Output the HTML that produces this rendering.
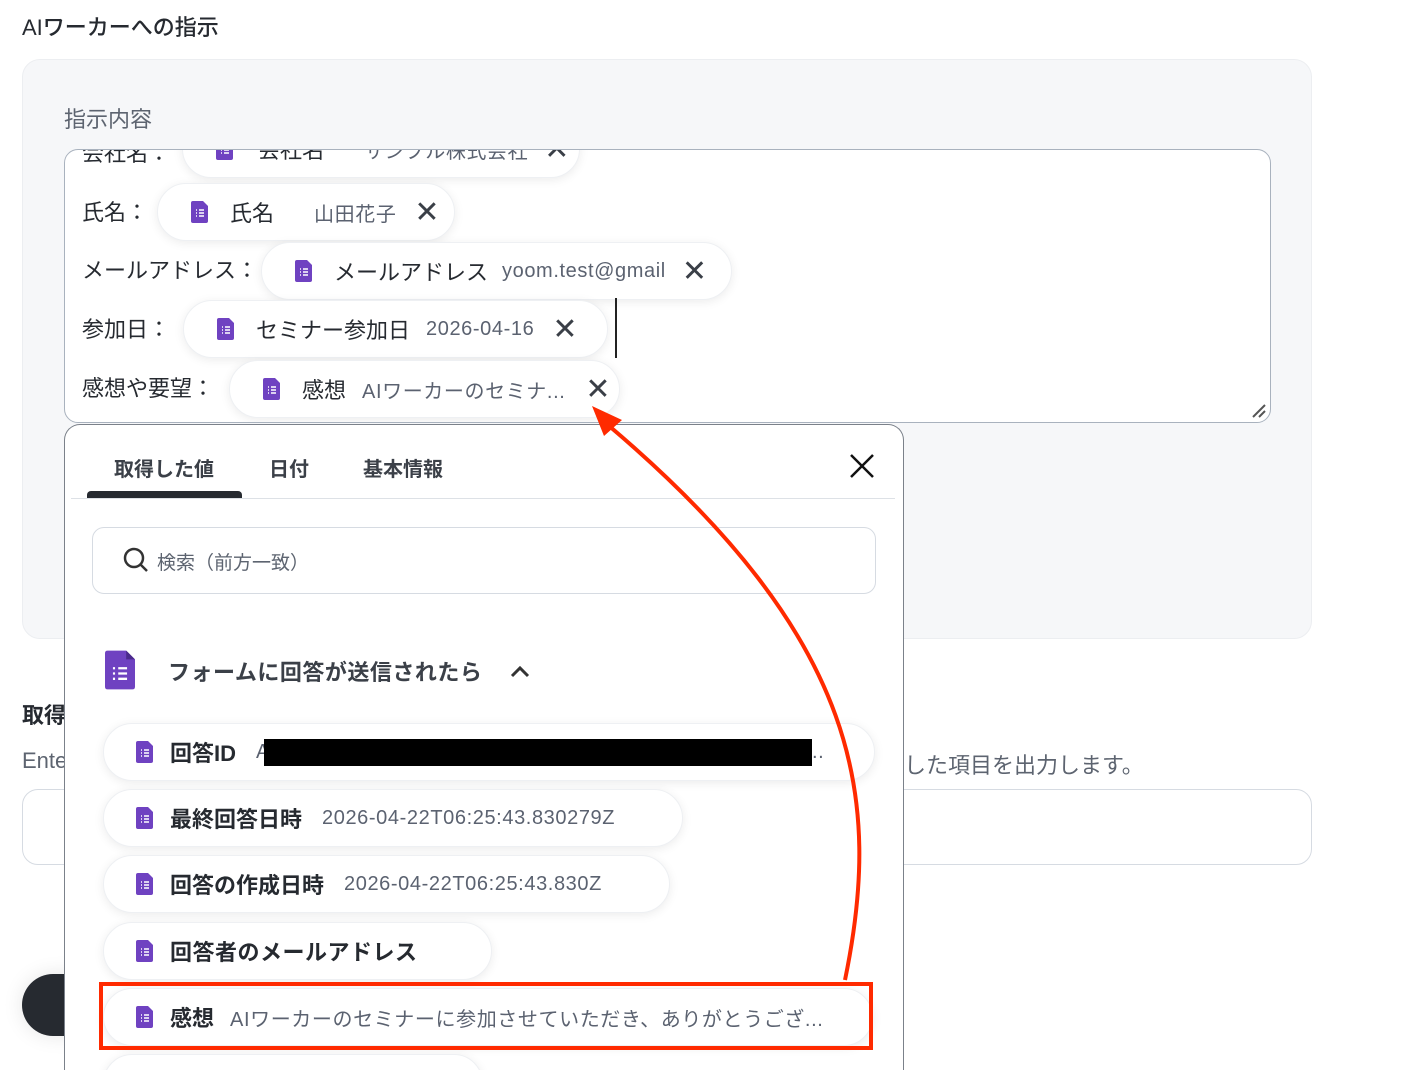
<!DOCTYPE html>
<html style="width:1406px;height:1070px;overflow:hidden"><head><meta charset="utf-8"><style>
*{margin:0;padding:0;box-sizing:border-box}
body{width:1406px;height:1070px;overflow:hidden;background:#fff;font-family:"Liberation Sans","Noto Sans CJK JP",sans-serif;color:#262a30;position:relative}
.a{position:absolute;white-space:nowrap}
.chip{position:absolute;height:58px;background:#fff;border-radius:29px;box-shadow:0 2px 10px rgba(0,0,0,0.08);border:1px solid #eef0f3;display:flex;align-items:center;white-space:nowrap}
.ic{display:inline-block;width:17px;height:22px;flex:none}
.x{font-size:30px;color:#3a3f47;font-weight:300}
.v{color:#5b6270;font-size:20px;letter-spacing:0.6px}
</style></head><body>
<div class="a" style="left:22px;top:10px;font-size:22px;color:#262a30;font-weight:500">AIワーカーへの指示</div>
<div class="a" style="left:22px;top:59px;width:1290px;height:580px;background:#f6f7f9;border:1px solid #eceef1;border-radius:18px"></div>
<div class="a" style="left:64px;top:102px;font-size:22px;color:#5d6470">指示内容</div>
<div class="a" style="left:64px;top:149px;width:1207px;height:274px;background:#fff;border:1px solid #a9b2be;border-radius:14px;overflow:hidden">
 <svg class="a" style="right:3px;bottom:3px" width="18" height="18"><path d="M4 16L16 4M10 16L16 10" stroke="#555" stroke-width="2"/></svg>
 <div class="a" style="left:17px;top:-14px;font-size:22px">会社名：</div>
 <div class="chip" style="left:117px;top:-30px;width:398px;padding-left:33px"><svg class="ic" viewBox="0 0 17 22"><path d="M0 2Q0 0 2 0H12L17 5V20Q17 22 15 22H2Q0 22 0 20Z" fill="#6f42c1"/><path d="M5 9h1M8 9h5M5 12h1M8 12h5M5 15h1M8 15h5" stroke="#fff" stroke-width="1.5"/></svg><span style="font-size:22px;margin-left:25px">会社名</span><span class="v" style="margin-left:40px">サンプル株式会社</span><span class="x" style="margin-left:16px">✕</span></div>
 <div class="a" style="left:17px;top:45px;font-size:22px">氏名：</div>
 <div class="chip" style="left:92px;top:33px;width:298px;padding-left:33px"><svg class="ic" viewBox="0 0 17 22"><path d="M0 2Q0 0 2 0H12L17 5V20Q17 22 15 22H2Q0 22 0 20Z" fill="#6f42c1"/><path d="M5 9h1M8 9h5M5 12h1M8 12h5M5 15h1M8 15h5" stroke="#fff" stroke-width="1.5"/></svg><span style="font-size:22px;margin-left:22px">氏名</span><span class="v" style="margin-left:40px">山田花子</span><span class="x" style="margin-left:18px">✕</span></div>
 <div class="a" style="left:17px;top:103px;font-size:22px">メールアドレス：</div>
 <div class="chip" style="left:196px;top:92px;width:471px;padding-left:33px"><svg class="ic" viewBox="0 0 17 22"><path d="M0 2Q0 0 2 0H12L17 5V20Q17 22 15 22H2Q0 22 0 20Z" fill="#6f42c1"/><path d="M5 9h1M8 9h5M5 12h1M8 12h5M5 15h1M8 15h5" stroke="#fff" stroke-width="1.5"/></svg><span style="font-size:22px;margin-left:22px">メールアドレス</span><span class="v" style="margin-left:14px">yoom.test@gmail</span><span class="x" style="margin-left:16px">✕</span></div>
 <div class="a" style="left:17px;top:162px;font-size:22px">参加日：</div>
 <div class="chip" style="left:118px;top:150px;width:425px;padding-left:33px"><svg class="ic" viewBox="0 0 17 22"><path d="M0 2Q0 0 2 0H12L17 5V20Q17 22 15 22H2Q0 22 0 20Z" fill="#6f42c1"/><path d="M5 9h1M8 9h5M5 12h1M8 12h5M5 15h1M8 15h5" stroke="#fff" stroke-width="1.5"/></svg><span style="font-size:22px;margin-left:22px">セミナー参加日</span><span class="v" style="margin-left:16px">2026-04-16</span><span class="x" style="margin-left:18px">✕</span></div>
 <div class="a" style="left:550px;top:148px;width:2px;height:60px;background:#222"></div>
 <div class="a" style="left:17px;top:221px;font-size:22px">感想や要望：</div>
 <div class="chip" style="left:164px;top:210px;width:391px;padding-left:33px"><svg class="ic" viewBox="0 0 17 22"><path d="M0 2Q0 0 2 0H12L17 5V20Q17 22 15 22H2Q0 22 0 20Z" fill="#6f42c1"/><path d="M5 9h1M8 9h5M5 12h1M8 12h5M5 15h1M8 15h5" stroke="#fff" stroke-width="1.5"/></svg><span style="font-size:22px;margin-left:22px">感想</span><span class="v" style="margin-left:16px">AIワーカーのセミナ...</span><span class="x" style="margin-left:20px">✕</span></div>
</div>
<div class="a" style="left:22px;top:698px;font-size:22px;font-weight:bold">取得</div>
<div class="a" style="left:22px;top:748px;font-size:22px;color:#5d6470">Ente</div>
<div class="a" style="left:904px;top:748px;font-size:22px;color:#5d6470">した項目を出力します。</div>
<div class="a" style="left:22px;top:789px;width:1290px;height:76px;border:1px solid #d6dbe2;border-radius:16px"></div>
<div class="a" style="left:22px;top:974px;width:80px;height:62px;background:#262a30;border-radius:31px;box-shadow:0 0 20px rgba(0,0,0,0.1)"></div>
<div class="a" style="left:64px;top:424px;width:840px;height:646px;background:#fff;border:1px solid #7b818a;border-bottom:none;border-radius:16px 16px 0 0;overflow:hidden">
 <div class="a" style="left:49px;top:28px;font-size:20px;font-weight:bold;color:#3b4048">取得した値</div>
 <div class="a" style="left:204px;top:28px;font-size:20px;font-weight:bold;color:#3b4048">日付</div>
 <div class="a" style="left:298px;top:28px;font-size:20px;font-weight:bold;color:#3b4048">基本情報</div>
 <svg class="a" style="left:784px;top:28px" width="26" height="26"><path d="M2 2L24 24M24 2L2 24" stroke="#111" stroke-width="2.5"/></svg>
 <div class="a" style="left:22px;top:66px;width:155px;height:7px;background:#262a30;border-radius:4px 4px 0 0"></div>
 <div class="a" style="left:6px;top:73px;width:824px;height:1px;background:#dde1e6"></div>
 <div class="a" style="left:27px;top:102px;width:784px;height:67px;border:1px solid #d6dbe2;border-radius:12px"></div>
 <svg class="a" style="left:57px;top:121px" width="28" height="28"><circle cx="12" cy="12" r="9" fill="none" stroke="#333" stroke-width="2.5"/><path d="M18.5 18.5L25 25" stroke="#333" stroke-width="2.5"/></svg>
 <div class="a" style="left:92px;top:123px;font-size:19px;color:#5d6470">検索（前方一致）</div>
 <svg class="a" style="left:40px;top:224px" width="30" height="42" viewBox="0 0 17 22"><path d="M0 1.5Q0 0 1.5 0H12L17 5V20.5Q17 22 15.5 22H1.5Q0 22 0 20.5Z" fill="#6f42c1"/><path d="M12 0V5H17Z" fill="#4b2a8c"/><path d="M4.5 10h1.2M7.5 10h5M4.5 13h1.2M7.5 13h5M4.5 16h1.2M7.5 16h5" stroke="#fff" stroke-width="1.3"/></svg>
 <div class="a" style="left:103px;top:230px;font-size:22px;font-weight:bold;color:#3b4048;letter-spacing:0.5px">フォームに回答が送信されたら</div>
 <svg class="a" style="left:445px;top:239px" width="20" height="14"><path d="M2 12L10 4L18 12" fill="none" stroke="#333" stroke-width="3"/></svg>
 <div class="chip" style="left:38px;top:298px;width:772px;padding-left:32px"><svg class="ic" viewBox="0 0 17 22"><path d="M0 2Q0 0 2 0H12L17 5V20Q17 22 15 22H2Q0 22 0 20Z" fill="#6f42c1"/><path d="M5 9h1M8 9h5M5 12h1M8 12h5M5 15h1M8 15h5" stroke="#fff" stroke-width="1.5"/></svg><span style="font-size:22px;font-weight:bold;margin-left:17px">回答ID</span><span class="v" style="margin-left:20px">A</span><span style="display:inline-block;width:548px;height:27px;background:#000;margin-left:-6px"></span><span class="v">..</span></div>
 <div class="chip" style="left:38px;top:364px;width:580px;padding-left:32px"><svg class="ic" viewBox="0 0 17 22"><path d="M0 2Q0 0 2 0H12L17 5V20Q17 22 15 22H2Q0 22 0 20Z" fill="#6f42c1"/><path d="M5 9h1M8 9h5M5 12h1M8 12h5M5 15h1M8 15h5" stroke="#fff" stroke-width="1.5"/></svg><span style="font-size:22px;font-weight:bold;margin-left:17px">最終回答日時</span><span class="v" style="margin-left:20px">2026-04-22T06:25:43.830279Z</span></div>
 <div class="chip" style="left:38px;top:430px;width:567px;padding-left:32px"><svg class="ic" viewBox="0 0 17 22"><path d="M0 2Q0 0 2 0H12L17 5V20Q17 22 15 22H2Q0 22 0 20Z" fill="#6f42c1"/><path d="M5 9h1M8 9h5M5 12h1M8 12h5M5 15h1M8 15h5" stroke="#fff" stroke-width="1.5"/></svg><span style="font-size:22px;font-weight:bold;margin-left:17px">回答の作成日時</span><span class="v" style="margin-left:20px">2026-04-22T06:25:43.830Z</span></div>
 <div class="chip" style="left:38px;top:497px;width:389px;padding-left:32px"><svg class="ic" viewBox="0 0 17 22"><path d="M0 2Q0 0 2 0H12L17 5V20Q17 22 15 22H2Q0 22 0 20Z" fill="#6f42c1"/><path d="M5 9h1M8 9h5M5 12h1M8 12h5M5 15h1M8 15h5" stroke="#fff" stroke-width="1.5"/></svg><span style="font-size:22px;font-weight:bold;margin-left:17px;letter-spacing:0.5px">回答者のメールアドレス</span></div>
 <div class="chip" style="left:38px;top:563px;width:770px;padding-left:32px"><svg class="ic" viewBox="0 0 17 22"><path d="M0 2Q0 0 2 0H12L17 5V20Q17 22 15 22H2Q0 22 0 20Z" fill="#6f42c1"/><path d="M5 9h1M8 9h5M5 12h1M8 12h5M5 15h1M8 15h5" stroke="#fff" stroke-width="1.5"/></svg><span style="font-size:22px;font-weight:bold;margin-left:17px">感想</span><span class="v" style="margin-left:16px">AIワーカーのセミナーに参加させていただき、ありがとうござ...</span></div>
 <div class="chip" style="left:38px;top:629px;width:380px"></div>
</div>
<div class="a" style="left:99px;top:982px;width:774px;height:68px;border:4px solid #ff2a00"></div>
<svg class="a" style="left:0;top:0" width="1406" height="1070">
 <path d="M845 980 C 882 800, 862 640, 608 425" fill="none" stroke="#ff2a00" stroke-width="4"/>
 <path d="M592 406 L622 420 L604 436 Z" fill="#ff2a00"/>
</svg>
</body></html>
